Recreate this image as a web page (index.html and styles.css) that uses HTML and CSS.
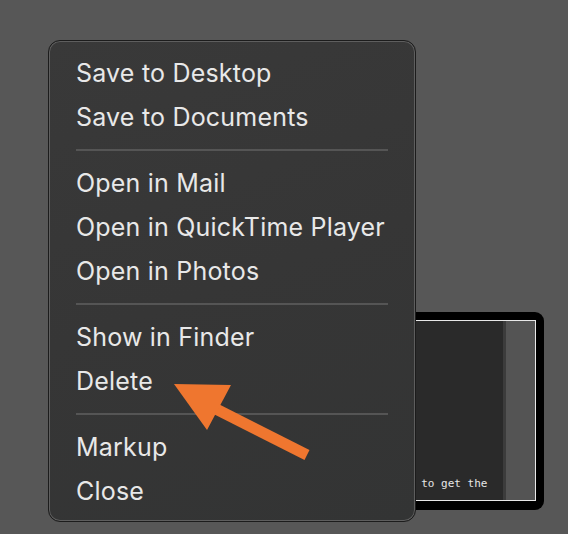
FILE: index.html
```html
<!DOCTYPE html>
<html>
<head>
<meta charset="utf-8">
<link rel="stylesheet" href="styles.css">
</head>
<body>
<div class="desktop">
  <div class="thumb">
    <div class="shot">
      <div class="shot-main"><span class="term">y to get the</span></div>
      <div class="shot-edge"></div>
      <div class="shot-side"></div>
    </div>
  </div>

  <div class="menu">
    <div class="item">Save to Desktop</div>
    <div class="item">Save to Documents</div>
    <div class="sep"></div>
    <div class="item">Open in Mail</div>
    <div class="item">Open in QuickTime Player</div>
    <div class="item">Open in Photos</div>
    <div class="sep"></div>
    <div class="item">Show in Finder</div>
    <div class="item">Delete</div>
    <div class="sep"></div>
    <div class="item">Markup</div>
    <div class="item">Close</div>
  </div>

  <svg class="arrow" width="568" height="534" viewBox="0 0 568 534">
    <line x1="214" y1="408" x2="307" y2="455" stroke="#ef762f" stroke-width="11"/>
    <polygon points="174,384 231,385 207,430" fill="#ef762f"/>
  </svg>
</div>
</body>
</html>
```
FILE: styles.css
```css
html, body {
  margin: 0;
  padding: 0;
}
body {
  background: #575757;
  width: 568px;
  height: 534px;
  overflow: hidden;
}
.desktop {
  position: relative;
  width: 568px;
  height: 534px;
}
.thumb {
  position: absolute;
  left: 396px;
  top: 312px;
  width: 148px;
  height: 198px;
  background: #000;
  border-radius: 9px;
  display: flex;
  padding: 8px 8px 9px 4px;
  box-sizing: border-box;
}
.shot {
  flex: 1;
  display: flex;
  border: 1px solid #e8e8e8;
}
.shot-main {
  flex: 1;
  background: #2a2a2a;
  display: flex;
  align-items: flex-end;
  padding: 0 0 10px 7px;
}
.term {
  font-family: "DejaVu Sans Mono", monospace;
  font-size: 11px;
  color: #e6e6e6;
  white-space: nowrap;
}
.shot-edge {
  width: 3px;
  background: #3c3c3c;
}
.shot-side {
  width: 29px;
  background: #545454;
}
.menu {
  position: absolute;
  left: 48px;
  top: 40px;
  width: 368px;
  height: 482px;
  box-sizing: border-box;
  border: 1px solid #1c1c1c;
  border-radius: 12px;
  box-shadow: inset 0 0 0 1px #5e5e5e;
  background: linear-gradient(160deg, #393939 0%, #363636 50%, #333434 100%);
  padding: 10px 27px 0 27px;
  display: flex;
  flex-direction: column;
}
.item {
  height: 44px;
  display: flex;
  align-items: center;
  font-family: "Inter", "Noto Sans", sans-serif;
  font-size: 25px;
  color: #e8e8e8;
  letter-spacing: 0.2px;
  white-space: nowrap;
}
.sep {
  height: 22px;
  display: flex;
  align-items: center;
}
.sep::before {
  content: "";
  display: block;
  width: 100%;
  height: 2px;
  background: #555;
}
.arrow {
  position: absolute;
  left: 0;
  top: 0;
}
```
